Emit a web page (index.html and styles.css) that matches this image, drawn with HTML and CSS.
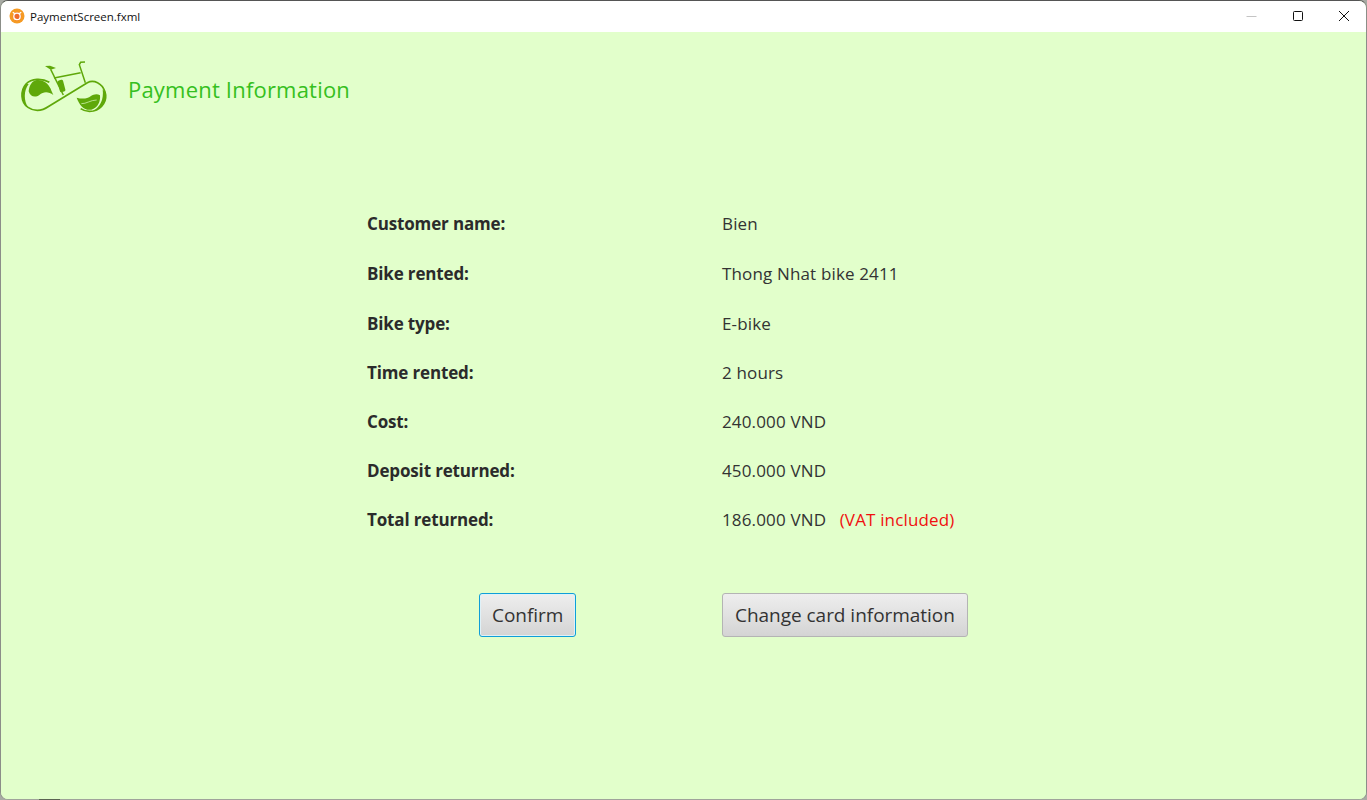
FILE: index.html
```html
<!DOCTYPE html>
<html lang="en">
<head>
<meta charset="utf-8">
<title>PaymentScreen.fxml</title>
<link rel="stylesheet" href="styles.css">
</head>
<body>
<div class="window">
  <header class="titlebar">
    <svg class="app-icon" width="16" height="16" viewBox="0 0 16 16">
      <circle cx="8" cy="8" r="7.500" fill="#f59a23"/>
      <circle cx="8" cy="8.400" r="4.200" fill="#ee6a2c"/>
      <circle cx="8" cy="8.400" r="3.200" fill="none" stroke="#fff" stroke-width="1.300"/>
      <path d="M3.800 4.200l2 1.600M12.200 4.200l-2 1.600" stroke="#fff" stroke-width="1.400"/>
    </svg>
    <span class="title-text">PaymentScreen.fxml</span>
    <div class="controls">
      <span class="ctl"><svg width="12" height="12" viewBox="0 0 12 12"><path d="M0.500 6.500h10" stroke="#c4c4c4" stroke-width="1"/></svg></span>
      <span class="ctl"><svg width="12" height="12" viewBox="0 0 12 12"><rect x="1.500" y="1.500" width="9" height="9" rx="1" fill="none" stroke="#111" stroke-width="1"/></svg></span>
      <span class="ctl"><svg width="12" height="12" viewBox="0 0 12 12"><path d="M1 1l10 10M11 1L1 11" stroke="#111" stroke-width="1"/></svg></span>
    </div>
  </header>
  <main class="content">
    <div class="brand">
      <svg class="logo" width="110" height="70" viewBox="0 0 330 210">
        <path d="M118 97 C96 84 64 85 48 102 C30 122 32 158 54 172 C74 186 98 182 118 168 L232 98 C252 88 276 100 285 125 C293 150 278 176 250 183 C235 186 222 183 212 176" fill="none" stroke="#5fa80a" stroke-width="5"/>
        <path d="M48 102 C30 122 32 158 54 172 C42 152 40 124 56 102Z" fill="#5fa80a"/>
        <path d="M285 125 C293 150 278 176 250 183 C270 170 282 150 278 118Z" fill="#5fa80a"/>
        <path d="M56 124 C58 106 66 92 80 90 C100 88 114 100 122 116 C125 124 128 130 130 135 C116 125 101 124 88 135 C76 144 60 140 56 124Z" fill="#5fa80a"/>
        <path d="M200 143 C215 147 230 148 243 138 C251 132 262 130 270 136 C272 154 264 174 244 179 C224 183 208 166 200 143Z" fill="#5fa80a"/>
        <path d="M214 161 C228 162 242 150 260 150" fill="none" stroke="#e2ffcb" stroke-width="2"/>
        <path d="M105 48 L120 47 L138 54 L122 59 Z" fill="#5fa80a"/>
        <g fill="none" stroke="#5fa80a" stroke-width="4.500">
          <path d="M122 58 L160 135"/>
          <path d="M132 84 L212 68"/>
          <path d="M225 36 L212 37 L208 44 L226 98"/>
        </g>
        <rect x="146" y="90" width="17" height="36" rx="5" transform="rotate(-15 154 108)" fill="#5fa80a"/>
      </svg>
      <h1 class="heading">Payment Information</h1>
    </div>
    <dl class="details">
      <dt>Customer name:</dt><dd>Bien</dd>
      <dt>Bike rented:</dt><dd>Thong Nhat bike 2411</dd>
      <dt>Bike type:</dt><dd>E-bike</dd>
      <dt>Time rented:</dt><dd>2 hours</dd>
      <dt>Cost:</dt><dd>240.000 VND</dd>
      <dt>Deposit returned:</dt><dd>450.000 VND</dd>
      <dt>Total returned:</dt><dd>186.000 VND <span class="vat">(VAT included)</span></dd>
    </dl>
    <div class="actions">
      <div class="action-left"><button class="btn focused" type="button">Confirm</button></div>
      <button class="btn" type="button">Change card information</button>
    </div>
  </main>
</div>
<span class="taskbar-sliver"></span>
</body>
</html>
```
FILE: styles.css
```css
* { box-sizing: border-box; }
html, body { margin: 0; height: 100%; }
body {
  position: relative;
  background: #a8aba4;
  font-family: "Open Sans", "Noto Sans", sans-serif;
  color: #333;
  overflow: hidden;
}
.window {
  height: 800px;
  display: flex;
  flex-direction: column;
  border-radius: 8px;
  overflow: hidden;
  border: 1px solid #8b8e88;
  border-top-color: #555;
  border-bottom: 1px solid #a0a39b;
  background: #e2ffcb;
}
.titlebar {
  flex: 0 0 30px;
  background: #fff;
  display: flex;
  align-items: center;
  padding-left: 8px;
  padding-bottom: 1px;
}
.app-icon { display: block; }
.title-text {
  margin-left: 5px;
  font-family: "Open Sans", sans-serif;
  font-size: 11.500px;
  color: #111;
}
.controls { margin-left: auto; margin-right: -1px; margin-bottom: 1px; display: flex; }
.ctl {
  width: 46px;
  height: 29px;
  display: flex;
  align-items: center;
  justify-content: center;
}
.content {
  flex: 1;
  display: flex;
  flex-direction: column;
  background: #e2ffcb;
}
.brand {
  display: flex;
  align-items: flex-start;
  padding: 18px 0 0 9px;
  height: 83px;
}
.logo { display: block; }
.heading {
  margin: 24px 0 0 8px;
  font-size: 22px;
  line-height: 30px;
  font-weight: 400;
  letter-spacing: 0.2px;
  color: #35c020;
}
.details {
  margin: 84px 0 0 366px;
  display: grid;
  grid-template-columns: 355px 1fr;
  grid-template-rows: 50px 50px 49px 49px 49px 49px 49px;
  align-items: center;
  font-size: 17px;
  line-height: 22px;
}
.details dt { font-weight: 700; color: #2b2b2b; letter-spacing: -0.15px; }
.details dd { margin: 0; color: #333; letter-spacing: 0.15px; }
.vat { color: #f01010; margin-left: 9px; }
.actions {
  margin: 49px 0 0 366px;
  display: grid;
  grid-template-columns: 355px auto;
  justify-content: start;
}
.action-left { padding-left: 112px; }
.btn {
  height: 44px;
  padding: 0 12px;
  border: 1px solid #b4b4b4;
  border-radius: 3px;
  background: linear-gradient(#eeeeee, #d4d4d4);
  font-family: "Open Sans", sans-serif;
  font-size: 19px;
  letter-spacing: -0.03px;
  color: #333;
}
.focused { border-color: #0f9ed8; box-shadow: inset 0 0 0 1px #dff1f8; }
.taskbar-sliver {
  position: absolute;
  left: 39px;
  bottom: 0;
  width: 21px;
  height: 1px;
  background: #5b6352;
}
```
